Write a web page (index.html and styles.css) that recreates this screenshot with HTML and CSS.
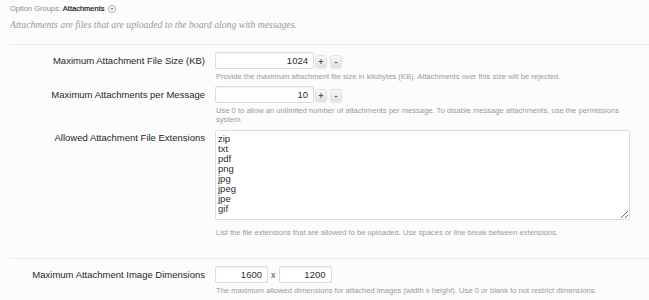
FILE: index.html
```html
<!DOCTYPE html>
<html lang="en">
<head>
  <meta charset="UTF-8">
  <title>Options: Attachments</title>
  <link rel="stylesheet" href="styles.css">
</head>
<body>

<div class="topline">
  <span class="crumb">Option Groups:</span>
  <span class="group">Attachments</span>
  <span class="menuIcon">
    <svg width="8" height="8" viewBox="0 0 8 8"><circle cx="4" cy="4" r="3.5" fill="#fff" stroke="#9a9a9a" stroke-width="0.8"/><path d="M2.4 3.2 L5.6 3.2 L4 5 Z" fill="#666"/></svg>
  </span>
</div>
<p class="explain">Attachments are files that are uploaded to the board along with messages.</p>

<form class="optionList">
  <div class="section">
    <dl class="ctrlUnit">
      <dt>Maximum Attachment File Size (KB)</dt>
      <dd>
        <div class="spinBox">
          <input type="text" class="num" value="1024">
          <button type="button" class="spin">+</button>
          <button type="button" class="spin">-</button>
        </div>
        <p class="hint">Provide the maximum attachment file size in kilobytes (KB). Attachments over this size will be rejected.</p>
      </dd>
    </dl>
    <dl class="ctrlUnit">
      <dt>Maximum Attachments per Message</dt>
      <dd>
        <div class="spinBox">
          <input type="text" class="num" value="10">
          <button type="button" class="spin">+</button>
          <button type="button" class="spin">-</button>
        </div>
        <p class="hint">Use 0 to allow an unlimited number of attachments per message. To disable message attachments, use the permissions system.</p>
      </dd>
    </dl>
    <dl class="ctrlUnit">
      <dt>Allowed Attachment File Extensions</dt>
      <dd>
        <textarea class="extList">zip
txt
pdf
png
jpg
jpeg
jpe
gif</textarea>
        <p class="hint">List the file extensions that are allowed to be uploaded. Use spaces or line break between extensions.</p>
      </dd>
    </dl>
  </div>

  <div class="section">
    <dl class="ctrlUnit">
      <dt>Maximum Attachment Image Dimensions</dt>
      <dd>
        <div class="dimBox">
          <input type="text" class="num small" value="1600">
          <span class="times">x</span>
          <input type="text" class="num small" value="1200">
        </div>
        <p class="hint">The maximum allowed dimensions for attached images (width x height). Use 0 or blank to not restrict dimensions.</p>
      </dd>
    </dl>
    <!-- next option, only its top edge is in view -->
    <dl class="ctrlUnit">
      <dt></dt>
      <dd>
        <div class="spinBox">
          <input type="text" class="num" value="">
          <button type="button" class="spin" aria-label="Increase"></button>
          <button type="button" class="spin" aria-label="Decrease"></button>
        </div>
      </dd>
    </dl>
  </div>
</form>

</body>
</html>
```

FILE: styles.css
```css
body {
  margin: 0;
  background-color: #fcfcfc;
  font-family: "Liberation Sans", Arial, sans-serif;
  color: #2b2b2b;
  overflow: hidden;
}
.topline {
  display: flex;
  align-items: center;
  padding: 3px 10px 0 10px;
  height: 11px;
  font-size: 7.5px;
}
.crumb {
  color: #8c8c8c;
  margin-right: 2px;
}
.group {
  color: #1a1a1a;
  -webkit-text-stroke: 0.2px #1a1a1a;
}
.menuIcon {
  display: flex;
  margin-left: 3px;
}
.explain {
  margin: 4px 10px 12px 10px;
  font-family: "Liberation Serif", Georgia, serif;
  font-style: italic;
  font-size: 9.7px;
  line-height: 14px;
  color: #9a9a9a;
}
.section {
  margin-left: 10px;
  border-top: 1px solid #e6edf1;
  padding-top: 7px;
}
.section + .section {
  margin-top: 21px;
}
.ctrlUnit {
  display: grid;
  grid-template-columns: 195px 1fr;
  column-gap: 10px;
  margin: 0 0 5px 0;
}
.ctrlUnit dt {
  text-align: right;
  font-size: 9.5px;
  line-height: 17px;
  color: #262626;
}
.ctrlUnit dd {
  margin: 0;
}
.spinBox, .dimBox {
  display: flex;
  align-items: center;
  height: 17px;
}
.num {
  box-sizing: border-box;
  width: 99px;
  height: 17px;
  padding: 0 5px;
  border: 1px solid #dcdcdc;
  border-radius: 2px;
  background-color: #fff;
  box-shadow: inset 0 1px 2px rgba(0, 0, 0, 0.06);
  font-family: "Liberation Sans", Arial, sans-serif;
  font-size: 9.5px;
  text-align: right;
  color: #2b2b2b;
}
.num.small {
  flex: none;
  width: 53px;
}
.times {
  font-size: 9px;
  margin: 0 3px;
  color: #444;
}
.spin {
  box-sizing: border-box;
  width: 12px;
  height: 13px;
  margin: 2px 0 0 1px;
  padding: 0;
  border: 1px solid #e2e2e2;
  border-radius: 3px;
  background: linear-gradient(#f8f8f8, #e2e2e2);
  box-shadow: 0 1px 1px rgba(0, 0, 0, 0.08);
  font-family: "Liberation Sans", Arial, sans-serif;
  font-size: 9px;
  font-weight: bold;
  line-height: 10px;
  color: #555;
}
.spin + .spin {
  margin-left: 3px;
}
.extList {
  box-sizing: border-box;
  display: block;
  width: 415px;
  height: 90px;
  margin: 1px 0 0 0;
  padding: 3px 2px;
  border: 1px solid #dcdcdc;
  border-radius: 2px;
  background-color: #fff;
  font-family: "Liberation Sans", Arial, sans-serif;
  font-size: 9.5px;
  line-height: 10px;
  color: #2b2b2b;
  resize: both;
}
.hint {
  margin: 3px 0 0 1px;
  font-size: 7.6px;
  line-height: 9px;
  color: #9a9a9a;
  max-width: 405px;
}
.extList + .hint {
  margin-top: 8px;
}
```
